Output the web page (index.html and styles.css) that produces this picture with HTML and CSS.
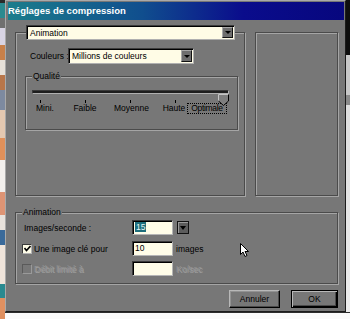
FILE: index.html
```html
<!DOCTYPE html>
<html lang="fr">
<head>
    <meta charset="UTF-8">
    <meta name="viewport" content="width=device-width, initial-scale=1.0">
    <title>Réglages de compression</title>
    <link rel="stylesheet" href="styles.css">
</head>
<body>
    <div class="screen">
        <div class="desk-left"></div>
        <div class="dialog">
            <div class="titlebar">Réglages de compression</div>
            <div class="dialog-body">
                <div class="top-row">
                    <div class="group main-group">
                        <div class="combo combo-codec"><span class="combo-text">Animation</span><span class="drop-btn"></span></div>
                        <div class="colors-row">
                            <span class="colors-label">Couleurs :</span>
                            <div class="combo combo-colors"><span class="combo-text">Millions de couleurs</span><span class="drop-btn"></span></div>
                        </div>
                        <div class="group quality-group">
                            <div class="group-label">Qualité</div>
                            <div class="slider">
                                <div class="track"></div>
                                <div class="ticks"><i></i><i></i><i></i><i></i><i></i></div>
                                <div class="tick-labels">
                                    <span class="lbl-mini">Mini.</span>
                                    <span class="lbl-low">Faible</span>
                                    <span class="lbl-mid">Moyenne</span>
                                    <span class="lbl-high">Haute</span>
                                    <span class="lbl-best">Optimale</span>
                                </div>
                                <svg class="thumb" width="11" height="12" viewBox="0 0 11 12">
                                    <polygon points="0.5,0.5 10.5,0.5 10.5,7 5.5,11.5 0.5,7" fill="#7e7e7e"/>
                                    <polyline points="0.5,7 0.5,0.5 10.5,0.5" fill="none" stroke="#c4c4c4"/>
                                    <polyline points="10.5,0.5 10.5,7 5.5,11.5 0.5,7" fill="none" stroke="#000"/>
                                </svg>
                            </div>
                        </div>
                    </div>
                    <div class="group preview"></div>
                </div>

                <div class="group anim-group">
                    <div class="group-label">Animation</div>
                    <div class="anim-row row-fps">
                        <span class="row-label">Images/seconde :</span>
                        <div class="field"><span class="sel">15</span></div>
                        <span class="spin-btn"></span>
                    </div>
                    <div class="anim-row row-key">
                        <label class="check-label">
                            <span class="check">
                                <svg width="7" height="7" viewBox="0 0 7 7"><polyline points="0.5,3 2.5,5.5 6.5,1" fill="none" stroke="#000" stroke-width="1.6"/></svg>
                            </span>
                            Une image clé pour
                        </label>
                        <div class="field">10</div>
                        <span class="after">images</span>
                    </div>
                    <div class="anim-row row-rate disabled">
                        <label class="check-label">
                            <span class="check check-off"></span>
                            Débit limité à
                        </label>
                        <div class="field"></div>
                        <span class="after">Ko/sec</span>
                    </div>
                </div>

                <div class="buttons">
                    <button class="btn btn-cancel">Annuler</button>
                    <button class="btn btn-ok">OK</button>
                </div>
            </div>
        </div>
        <div class="desk-right"></div>
    </div>
    <div class="desk-bottom"><span class="desk-corner"></span><span class="desk-strip"></span></div>

    <svg class="cursor" width="10" height="15" viewBox="0 0 10 15">
        <path d="M0.5,0.5 L0.5,11.5 L3,9 L5,13.5 L7,12.5 L5,8.5 L8.5,8.5 Z" fill="#fff" stroke="#000"/>
    </svg>
</body>
</html>
```

FILE: styles.css
```css
* {
    box-sizing: border-box;
}
body {
    margin: 0;
    width: 350px;
    height: 319px;
    overflow: hidden;
    position: relative;
    background: #fff;
    font-family: "Liberation Sans", Arial, sans-serif;
    font-size: 8.5px;
    color: #000;
}
.screen {
    display: flex;
    height: 312px;
}
.desk-left {
    width: 5px;
    background: linear-gradient(#2a2a2a 0 3px, #2a8a90 3px 18px, #707070 18px 28px, #d8d4e4 28px 45px,
        #c8804a 45px 60px, #e6e0d8 60px 75px, #b8764a 75px 90px, #7d8aa0 90px 110px,
        #e4c8b0 110px 138px, #e0905a 138px 160px, #f2efec 160px 192px, #de9474 192px 215px,
        #e8e2dc 215px 230px, #3a6a9a 230px 245px, #efe4da 245px 284px, #2a8a90 284px 298px, #e09060 298px);
}
.desk-right {
    width: 4px;
    background: linear-gradient(#0e0e0e 0 55px, #c8c8c8 55px 95px, #8a8a8a 95px 105px, #dedede 105px, #ececec);
}
.desk-bottom {
    display: flex;
    height: 7px;
}
.desk-corner {
    width: 5px;
    background: #e09060;
}
.desk-strip {
    flex: 1;
    background: #fafafa;
    border-top: 1px solid #2c2c2c;
}

/* dialog frame */
.dialog {
    width: 341px;
    height: 312px;
    background: #777;
    border: 1px solid;
    border-color: #a9a9a9 #1c1c1c #1c1c1c #a9a9a9;
    padding: 1px 1px 1px 2px;
    display: flex;
    flex-direction: column;
}
.titlebar {
    height: 18px;
    line-height: 18px;
    color: #fff;
    font-weight: bold;
    font-size: 9.5px;
    background: linear-gradient(90deg, #1b7d8c 0%, #104e8e 40%, #0a0c8c 70%, #07077e 100%);
}
.dialog-body {
    flex: 1;
    padding: 0 6px 0 7px;
}

/* etched group boxes */
.group {
    border: 1px solid #4b4b4b;
    box-shadow: inset 1px 1px 0 #a5a5a5, 1px 1px 0 #a5a5a5;
}
.group-label {
    width: fit-content;
    height: 11px;
    line-height: 11px;
    margin: -6px 0 0 6px;
    padding: 0 1px;
    background: #777;
}
.top-row {
    display: flex;
    gap: 10px;
    margin-top: 12px;
}
.main-group {
    width: 230px;
    height: 164px;
}
.preview {
    width: 83px;
    height: 164px;
}

/* combo boxes */
.combo {
    display: flex;
    height: 15px;
    background: #fffce6;
    border: 1px solid;
    border-color: #3c3c3c #b0b0b0 #b0b0b0 #3c3c3c;
    box-shadow: inset 1px 1px 0 #000;
}
.combo-codec {
    width: 209px;
    margin: -8px 0 0 10px;
}
.combo-text {
    flex: 1;
    padding: 1px 0 0 3px;
    line-height: 12px;
    white-space: nowrap;
}
.drop-btn {
    width: 11px;
    margin: 1px 1px 1px 0;
    display: flex;
    align-items: center;
    justify-content: center;
    background: #6e6e6e;
    border: 1px solid;
    border-color: #a8a8a8 #111 #111 #a8a8a8;
}
.drop-btn::after {
    content: "";
    border-left: 3px solid transparent;
    border-right: 3px solid transparent;
    border-top: 3px solid #000;
}
.colors-row {
    display: flex;
    align-items: center;
    height: 16px;
    margin-top: 8px;
    padding-left: 14px;
}
.colors-label {
    flex: none;
    width: 38px;
    white-space: nowrap;
}
.combo-colors {
    flex: none;
    width: 126px;
    height: 16px;
}

/* quality slider */
.quality-group {
    width: 213px;
    height: 54px;
    margin: 12px 0 0 9px;
}
.slider {
    position: relative;
}
.track {
    width: 197px;
    height: 4px;
    margin: 8px 0 0 6px;
    border: 1px solid;
    border-color: #3a3a3a #b0b0b0 #b0b0b0 #3a3a3a;
    background: #1e1e1e;
}
.ticks {
    display: flex;
    justify-content: space-between;
    width: 181px;
    height: 3px;
    margin: 6px 0 0 14px;
}
.ticks i {
    width: 1px;
    background: #000;
}
.tick-labels {
    display: flex;
    height: 11px;
    line-height: 11px;
    margin-left: 10px;
    white-space: nowrap;
}
.tick-labels span {
    flex: none;
    text-align: center;
}
.lbl-mini { width: 18px; text-align: left !important; }
.lbl-low { width: 24px; margin-left: 19px; }
.lbl-mid { width: 34px; margin-left: 17px; }
.lbl-high { width: 24px; margin-left: 14px; }
.lbl-best {
    width: 40px;
    margin-left: 1px;
    line-height: 9px;
    letter-spacing: -0.3px;
    border: 1px dotted #000;
}
.thumb {
    position: absolute;
    left: 192px;
    top: 4px;
}

/* animation group */
.anim-group {
    width: 323px;
    height: 72px;
    margin-top: 16px;
}
.anim-row {
    display: grid;
    grid-template-columns: 110px 41px auto;
    align-items: center;
    height: 15px;
    padding-left: 6px;
    white-space: nowrap;
}
.row-fps { margin-top: 2px; }
.row-key { margin-top: 6px; }
.row-rate { margin-top: 5px; }
.row-label {
    padding-left: 2px;
}
.field {
    height: 15px;
    line-height: 13px;
    padding-left: 2px;
    background: #fffde8;
    border: 1px solid;
    border-color: #3a3a3a #b5b5b5 #b5b5b5 #3a3a3a;
    box-shadow: inset 1px 1px 0 #000;
}
.sel {
    padding: 0 1px;
    background: #1d6e7c;
    color: #e8f6f6;
}
.spin-btn {
    width: 12px;
    height: 13px;
    margin-left: 4px;
    display: flex;
    align-items: center;
    justify-content: center;
    background: #5c5c5c;
    border: 1px solid #111;
    box-shadow: inset 1px 1px 0 #9a9a9a;
}
.spin-btn::after {
    content: "";
    border-left: 3px solid transparent;
    border-right: 3px solid transparent;
    border-top: 4px solid #000;
}
.after {
    padding-left: 3px;
}
.check-label {
    display: flex;
    align-items: center;
    gap: 2px;
}
.check {
    width: 10px;
    height: 10px;
    display: flex;
    align-items: center;
    justify-content: center;
    background: #fffde8;
    border: 1px solid;
    border-color: #3a3a3a #b5b5b5 #b5b5b5 #3a3a3a;
}
.check-off {
    background: #777;
    border-color: #5a5a5a #9a9a9a #9a9a9a #5a5a5a;
}
.disabled .check-label,
.disabled .after {
    color: #939393;
    text-shadow: 1px 1px 0 #a0a0a0;
}

/* buttons */
.buttons {
    display: flex;
    justify-content: flex-end;
    gap: 11px;
    margin-top: 6px;
}
.btn {
    height: 18px;
    padding: 0;
    font: inherit;
    color: #000;
    background: #777;
    border: 1px solid;
    border-color: #b8b8b8 #000 #000 #b8b8b8;
    box-shadow: inset -1px -1px 0 #4a4a4a, inset 1px 1px 0 #929292;
}
.btn-cancel {
    width: 51px;
}
.btn-ok {
    width: 47px;
    border-color: #000;
    box-shadow: inset 1px 1px 0 #b8b8b8, inset -1px -1px 0 #000, inset -2px -2px 0 #4a4a4a;
}

.cursor {
    position: absolute;
    left: 240px;
    top: 243px;
}
```
